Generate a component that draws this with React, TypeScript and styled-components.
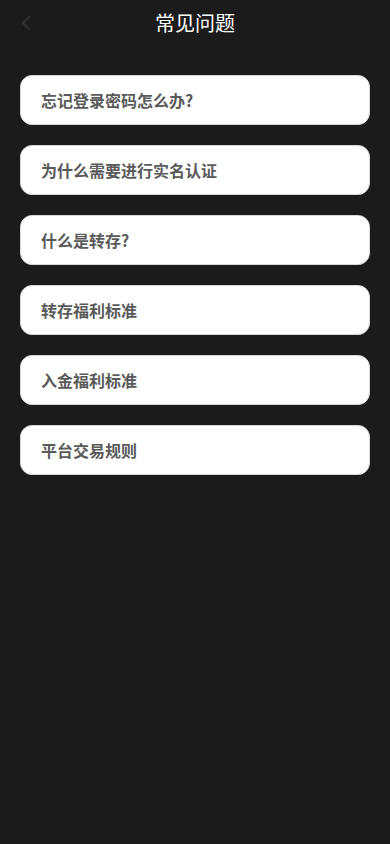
import React from 'react';
import styled, { createGlobalStyle } from 'styled-components';

const GlobalStyle = createGlobalStyle`
  html, body {
    margin: 0;
    padding: 0;
    background: #1b1b1b;
    font-family: "Noto Sans CJK SC", "Noto Sans", sans-serif;
  }
`;

const Page = styled.div`
  min-height: 844px;
  background: #1b1b1b;
`;

const Header = styled.div`
  height: 46px;
  display: flex;
  align-items: center;
  justify-content: center;
  position: relative;
`;

const BackButton = styled.div`
  position: absolute;
  left: 18px;
  top: 13px;
  width: 16px;
  height: 20px;
  display: flex;
  align-items: center;
  justify-content: center;
`;

const Title = styled.h1`
  margin: 0;
  font-size: 20px;
  font-weight: 400;
  color: #ffffff;
  line-height: 46px;
`;

const List = styled.div`
  display: flex;
  flex-direction: column;
  gap: 20px;
  padding: 29px 20px 0;
`;

const Item = styled.div`
  height: 50px;
  box-sizing: border-box;
  background: #ffffff;
  border-radius: 12px;
  border: 1px solid #d8d8d8;
  display: flex;
  align-items: center;
  padding: 0 0 1px 20px;
  font-size: 16px;
  font-weight: 700;
  color: #5a5a5a;
`;

const questions = [
  '忘记登录密码怎么办?',
  '为什么需要进行实名认证',
  '什么是转存?',
  '转存福利标准',
  '入金福利标准',
  '平台交易规则',
];

const App = () => {
  return (
    <Page>
      <GlobalStyle />
      <Header>
        <BackButton>
          <svg width="12" height="18" viewBox="0 0 12 18">
            <path d="M10 2 L3 9 L10 16" stroke="#333" strokeWidth="2" fill="none" />
          </svg>
        </BackButton>
        <Title>常见问题</Title>
      </Header>
      <List>
        {questions.map((q) => (
          <Item key={q}>{q}</Item>
        ))}
      </List>
    </Page>
  );
};

export default App;
